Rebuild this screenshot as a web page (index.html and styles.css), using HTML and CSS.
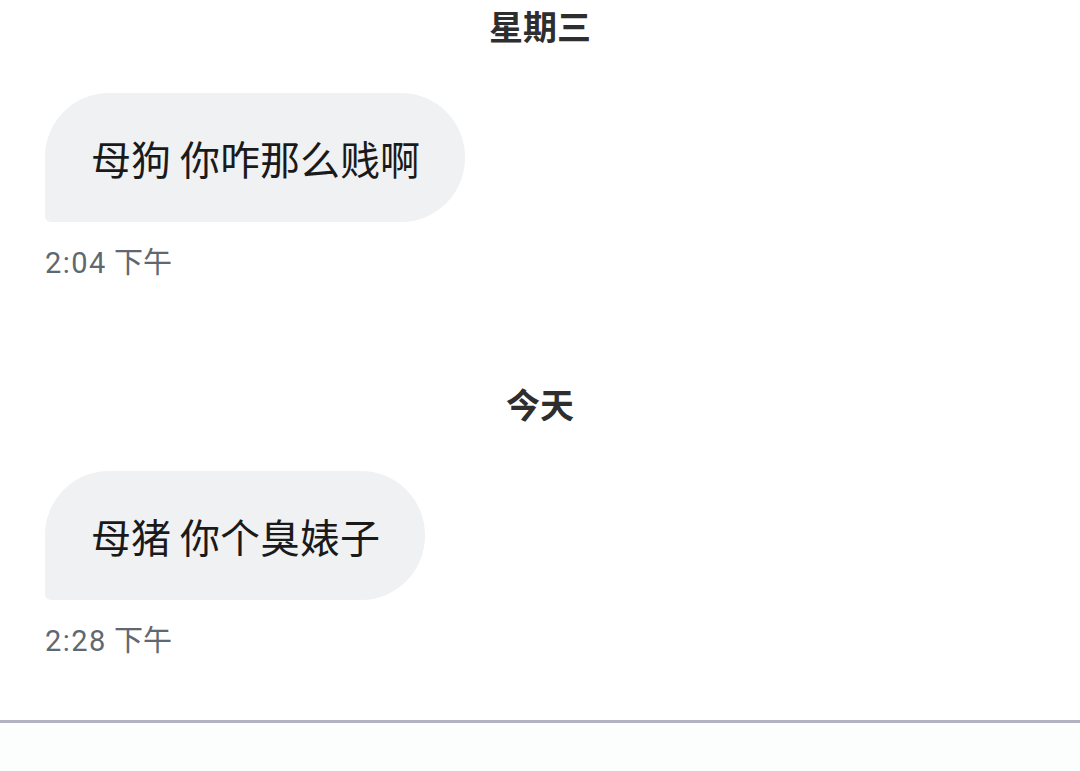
FILE: index.html
```html
<!DOCTYPE html>
<html lang="zh-CN">
<head>
<meta charset="utf-8">
<link rel="stylesheet" href="styles.css">
</head>
<body>
<main class="chat">
  <div class="day">星期三</div>
  <div class="msg">
    <div class="bubble">母狗 你咋那么贱啊</div>
    <div class="time"><span class="num">2:04</span> 下午</div>
  </div>
  <div class="day day-gap">今天</div>
  <div class="msg">
    <div class="bubble">母猪 你个臭婊子</div>
    <div class="time"><span class="num">2:28</span> 下午</div>
  </div>
</main>
<div class="divider"></div>
<div class="footer"></div>
</body>
</html>
```
FILE: styles.css
```css
html, body {
  margin: 0;
  padding: 0;
  background: #ffffff;
}
body {
  font-family: Roboto, "Noto Sans CJK SC", sans-serif;
  width: 1080px;
  height: 771px;
  overflow: hidden;
}
.chat {
  display: flex;
  flex-direction: column;
  padding: 0 45px;
  height: 720px;
  box-sizing: border-box;
}
.day {
  align-self: center;
  font-family: "Noto Sans CJK SC", sans-serif;
  font-weight: 700;
  font-size: 34px;
  line-height: 52px;
  color: #2e2e2e;
}
.day-gap {
  margin-top: 95px;
}
.msg {
  display: flex;
  flex-direction: column;
  align-items: flex-start;
  margin-top: 41px;
}
.bubble {
  background: #f0f1f3;
  color: #1a1a1a;
  font-family: "Noto Sans CJK SC", sans-serif;
  font-size: 40px;
  line-height: 49px;
  padding: 41px 45px 39px 46px;
  border-radius: 64px 64px 64px 6px;
}
.time {
  margin-top: 21px;
  font-size: 29px;
  line-height: 40px;
  color: #5f6870;
}
.num {
  letter-spacing: 1.5px;
}
.divider {
  height: 3px;
  background: #b1b2c0;
}
.footer {
  height: 48px;
  background: #fcfdfd;
}
```
